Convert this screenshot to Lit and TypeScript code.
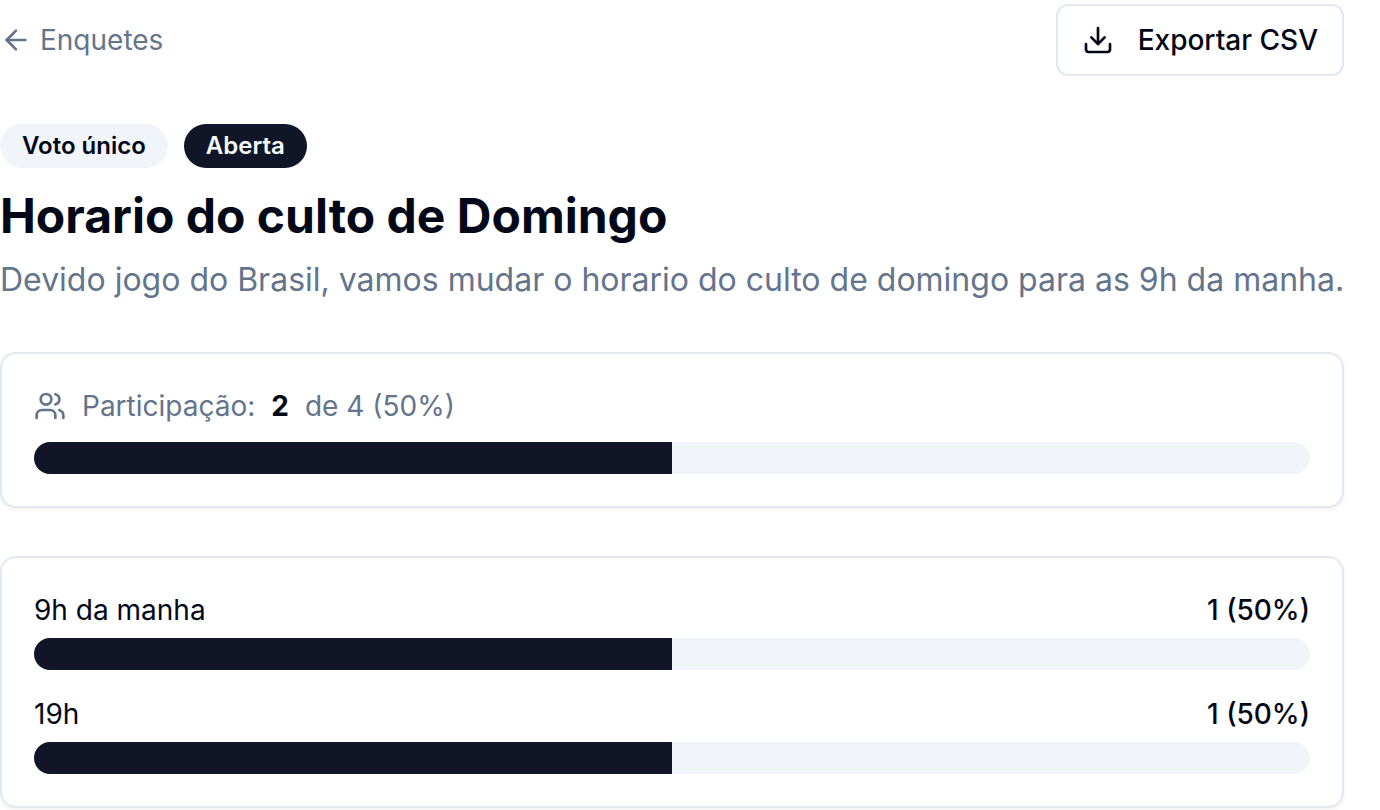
import { LitElement, html, css, svg } from "lit";
import { customElement, property, state } from "lit/decorators.js";

interface PollOption {
  label: string;
  votes: number;
}

const percent = (part: number, total: number) =>
  total === 0 ? 0 : Math.round((part / total) * 100);

const icon = (content: unknown) => html`
  <svg class="icon" viewBox="0 0 24 24" fill="none" stroke="currentColor" stroke-width="2"
    stroke-linecap="round" stroke-linejoin="round" aria-hidden="true">${content}</svg>
`;

const arrowLeft = svg`<path d="m12 19-7-7 7-7"/><path d="M19 12H5"/>`;

const download = svg`
  <path d="M21 15v4a2 2 0 0 1-2 2H5a2 2 0 0 1-2-2v-4"/>
  <path d="m7 10 5 5 5-5"/>
  <path d="M12 15V3"/>`;

const users = svg`
  <path d="M16 21v-2a4 4 0 0 0-4-4H6a4 4 0 0 0-4 4v2"/>
  <circle cx="9" cy="7" r="4"/>
  <path d="M22 21v-2a4 4 0 0 0-3-3.87"/>
  <path d="M16 3.13a4 4 0 0 1 0 7.75"/>`;

@customElement("poll-bar")
export class PollBar extends LitElement {
  static styles = css`
    :host {
      display: block;
    }
    .track {
      height: 32px;
      border-radius: 16px;
      overflow: hidden;
      background: #f1f5f9;
    }
    .fill {
      height: 100%;
      background: #101628;
    }
  `;

  @property({ type: Number }) value = 0;
  @property() label = "";

  render() {
    return html`
      <div class="track" role="progressbar" aria-label=${this.label}
        aria-valuemin="0" aria-valuemax="100" aria-valuenow=${this.value}>
        <div class="fill" style="width: ${this.value}%"></div>
      </div>
    `;
  }
}

@customElement("app-root")
export class AppRoot extends LitElement {
  static styles = css`
    :host {
      display: block;
      box-sizing: border-box;
      padding: 4px 36px 2px 0;
      background: #ffffff;
      color: #020817;
      font-family: Inter, "Liberation Sans", sans-serif;
      font-optical-sizing: none;
      font-size: 28px;
      line-height: 40px;
      -webkit-font-smoothing: antialiased;
    }
    .page {
      display: flex;
      flex-direction: column;
      gap: 48px;
    }
    .toolbar {
      display: flex;
      align-items: center;
      justify-content: space-between;
    }
    .icon {
      width: 32px;
      height: 32px;
      flex: none;
    }
    .back {
      display: inline-flex;
      align-items: center;
      gap: 8px;
      color: #64748b;
      text-decoration: none;
    }
    .export {
      display: inline-flex;
      align-items: center;
      gap: 24px;
      padding: 14px 24px;
      border: 2px solid #e2e8f0;
      border-radius: 12px;
      background: #ffffff;
      color: inherit;
      font: inherit;
      font-weight: 500;
      cursor: pointer;
    }
    /* The heading block may run on into the page's right gutter. */
    .heading {
      margin-right: -36px;
    }
    .badges {
      display: flex;
      gap: 16px;
    }
    .badge {
      padding: 6px 22px;
      border-radius: 22px;
      background: #f1f5f9;
      font-size: 24px;
      line-height: 32px;
      font-weight: 600;
    }
    .badge.open {
      background: #101628;
      color: #f8fafc;
    }
    .title {
      margin: 16px 0 8px;
      font-size: 48px;
      line-height: 64px;
      font-weight: 700;
    }
    .description {
      margin: 0;
      color: #64748b;
      font-size: 32px;
      line-height: 48px;
    }
    .card {
      display: flex;
      flex-direction: column;
      padding: 32px;
      border: 2px solid #e2e8f0;
      border-radius: 16px;
      background: #ffffff;
      box-shadow: 0 2px 4px rgba(0, 0, 0, 0.05);
    }
    .participation {
      gap: 16px;
    }
    .summary {
      display: flex;
      align-items: center;
      gap: 16px;
      color: #64748b;
    }
    .count {
      color: #020817;
      font-weight: 700;
    }
    .options {
      gap: 24px;
    }
    .option {
      display: flex;
      flex-direction: column;
      gap: 8px;
    }
    .row {
      display: flex;
      justify-content: space-between;
    }
    .votes {
      font-weight: 500;
    }
  `;

  @state() private members = 4;
  @state() private options: PollOption[] = [
    { label: "9h da manha", votes: 1 },
    { label: "19h", votes: 1 },
  ];

  private exportCsv() {
    const rows = this.options.map((o) => `"${o.label}",${o.votes}`).join("\n");
    const url = URL.createObjectURL(new Blob([rows], { type: "text/csv" }));
    const link = document.createElement("a");
    link.href = url;
    link.download = "enquete.csv";
    link.click();
    URL.revokeObjectURL(url);
  }

  private renderOption(option: PollOption, total: number) {
    const share = percent(option.votes, total);
    return html`
      <div class="option">
        <div class="row">
          <span>${option.label}</span>
          <span class="votes">${option.votes} (${share}%)</span>
        </div>
        <poll-bar .value=${share} .label=${option.label}></poll-bar>
      </div>
    `;
  }

  render() {
    const total = this.options.reduce((sum, o) => sum + o.votes, 0);
    const turnout = percent(total, this.members);
    return html`
      <main class="page">
        <nav class="toolbar">
          <a class="back" href="#enquetes">${icon(arrowLeft)}<span>Enquetes</span></a>
          <button class="export" type="button" @click=${this.exportCsv}>
            ${icon(download)}<span>Exportar CSV</span>
          </button>
        </nav>
        <header class="heading">
          <div class="badges">
            <span class="badge">Voto único</span>
            <span class="badge open">Aberta</span>
          </div>
          <h1 class="title">Horario do culto de Domingo</h1>
          <p class="description">Devido jogo do Brasil, vamos mudar o horario do culto de domingo para as 9h da manha.</p>
        </header>
        <section class="card participation">
          <div class="summary">
            ${icon(users)}<span>Participação:</span><span class="count">${total}</span>
            <span>de ${this.members} (${turnout}%)</span>
          </div>
          <poll-bar .value=${turnout} .label=${"Participação"}></poll-bar>
        </section>
        <section class="card options">
          ${this.options.map((option) => this.renderOption(option, total))}
        </section>
      </main>
    `;
  }
}
